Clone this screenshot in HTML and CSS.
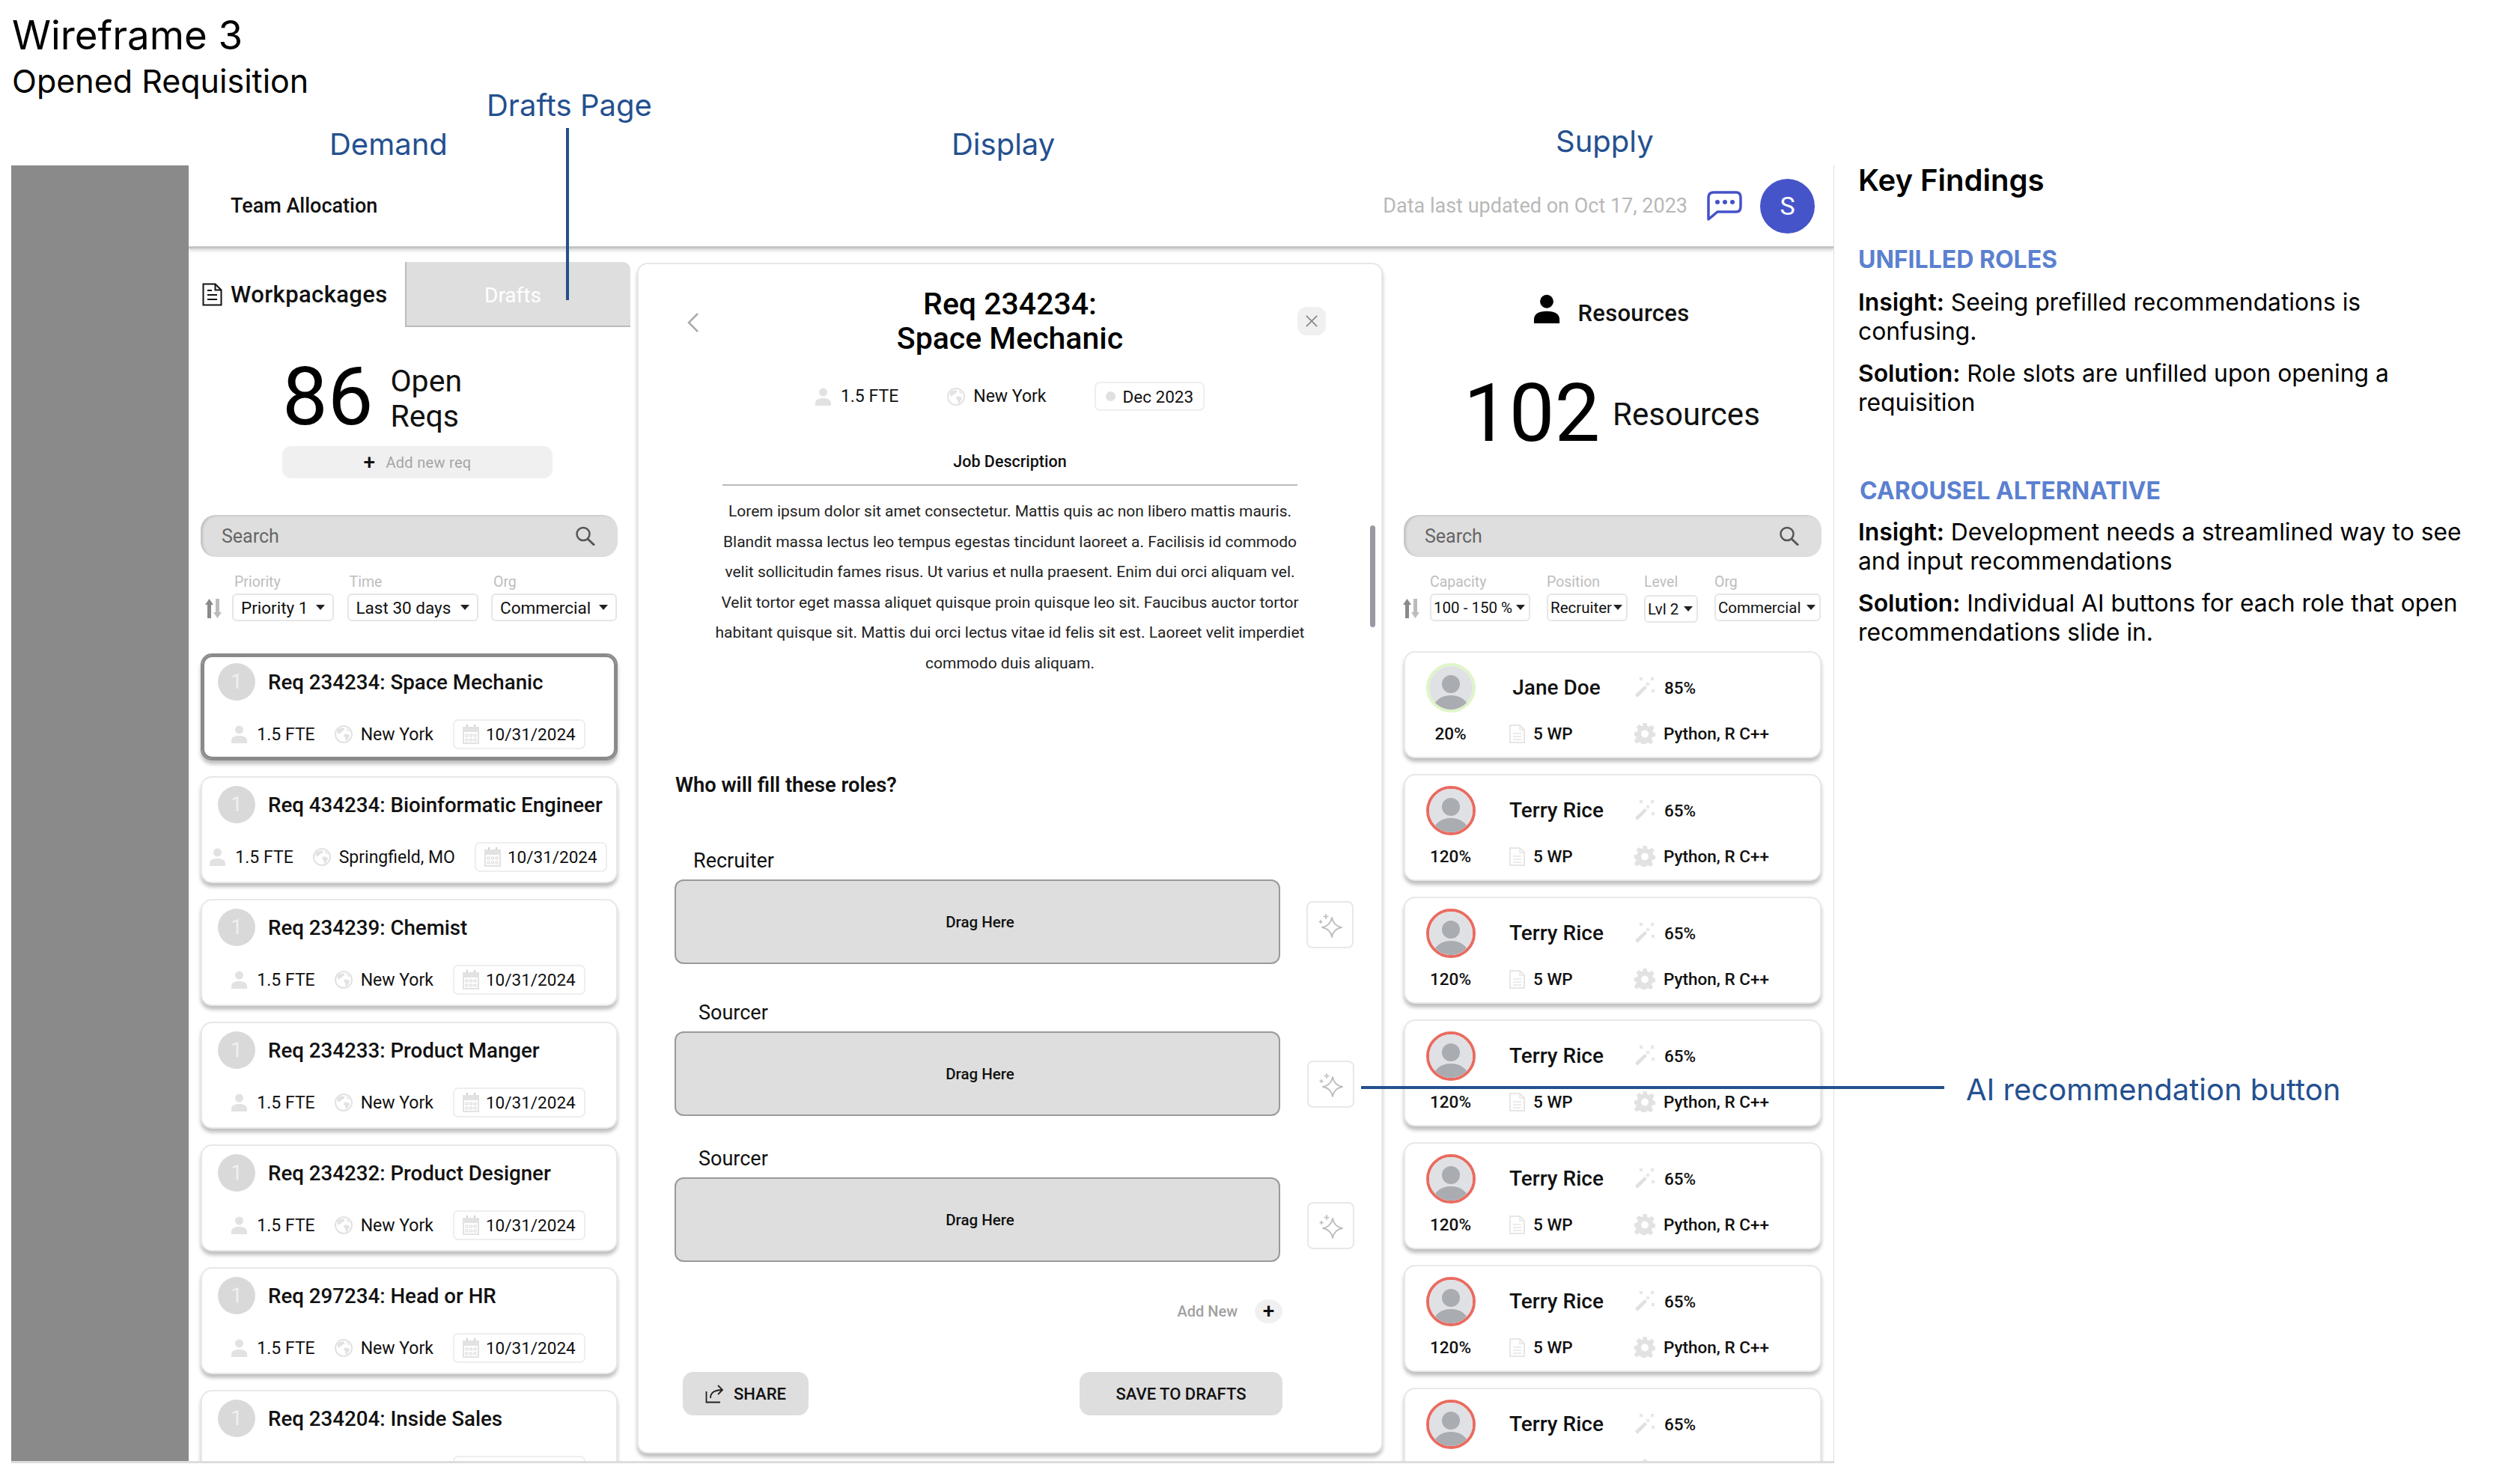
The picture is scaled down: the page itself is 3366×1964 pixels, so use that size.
FILE: index.html
```html
<!DOCTYPE html>
<html>
<head>
    <title>Wireframe 3 - Opened Requisition</title>
    <link rel="stylesheet" href="styles.css">
</head>
<body>
    <!-- shared icons -->
    <svg class="sprites" xmlns="http://www.w3.org/2000/svg">
        <symbol id="i-person" viewBox="0 0 21 24"><circle cx="10.5" cy="6" r="5.5"/><path d="M0 24v-3c0-5 4-7 10.500-7s10.500 2 10.500 7v3z"/></symbol>
        <symbol id="i-globe" viewBox="0 0 24 24"><circle cx="12" cy="12" r="11" fill="none" stroke="#e2e2e2" stroke-width="2"/><path d="M5 5c3-1 6-2 8-1 1 2-1 3-3 4-1 2-4 2-4 4-2-1-3-4-1-7zM13 12c3-1 6 0 7 2-1 3-3 6-5 7-1-2 0-4-1-5-2 0-2-3-1-4zM16 4c2 1 3 2 4 4-2 0-4-1-4-4z" fill="#e2e2e2"/></symbol>
        <symbol id="i-cal" viewBox="0 0 22 26"><path d="M0 4h22v6H0z" fill="#e2e2e2"/><path d="M5 0h2v5H5zM15 0h2v5h-2z" fill="#d0d0d0"/><rect x="1" y="4" width="20" height="21" fill="none" stroke="#e2e2e2" stroke-width="2"/><path d="M4 13h3v3H4zM9.500 13h3v3h-3zM15 13h3v3h-3zM4 19h3v3H4zM9.500 19h3v3h-3zM15 19h3v3h-3z" fill="none" stroke="#d8d8d8"/></symbol>
        <symbol id="i-search" viewBox="0 0 27 26"><circle cx="11" cy="10.500" r="8.500" fill="none" stroke="#555" stroke-width="2.500"/><path d="M17 17l9 8.500" stroke="#555" stroke-width="3"/></symbol>
        <symbol id="i-sort" viewBox="0 0 26 26"><path d="M5 26V8H2L7.500 0 13 8h-3v18z" fill="#8a8a8a"/><path d="M16 0v18h-3l5.500 8L24 18h-3V0z" fill="#bcbcbc"/></symbol>
        <symbol id="i-wand" viewBox="0 0 28 29"><path d="M1 24L14 12l3 3L4 28z" fill="#e0e0e0"/><path d="M15 10l3-3 3 3-3 3z" fill="#e8e8e8"/><path d="M7 1l4 4M11 1L7 5M22 1l4 4M26 1l-4 4M23 17l4 4M27 17l-4 4" stroke="#e0e0e0" stroke-width="1.500"/></symbol>
        <symbol id="i-doc" viewBox="0 0 21 25"><path d="M1 1h13l6 6v17H1z" fill="none" stroke="#e6e6e6" stroke-width="2"/><path d="M14 1v6h6M5 12h11M5 16h11M5 20h11" fill="none" stroke="#e6e6e6" stroke-width="1.500"/></symbol>
        <symbol id="i-gear" viewBox="0 0 28 28"><path d="M11.500 0h5l.8 4 2.600 1.100 3.400-2.300 3.500 3.500-2.300 3.400L25 12.300l3 .7v5l-4 .8-1.100 2.600 2.300 3.400-3.500 3.500-3.400-2.300-2.500 1-.8 3.200h-5l-.8-3.800-2.600-1.100-3.400 2.300-3.500-3.500 2.300-3.400L2.900 18 0 17.300v-5l3.800-.8 1.100-2.600-2.300-3.400 3.500-3.500 3.400 2.300 2-.9z" fill="#e2e2e2"/><circle cx="14" cy="14.500" r="5" fill="#fff"/></symbol>
        <symbol id="i-avatar" viewBox="0 0 66 66"><defs><clipPath id="avatar-clip"><circle cx="33" cy="33" r="29"/></clipPath></defs><circle cx="33" cy="33" r="29" fill="#dfe1e4"/><g clip-path="url(#avatar-clip)" fill="#a9acb1"><circle cx="33" cy="28" r="12"/><ellipse cx="33" cy="60" rx="23" ry="17"/></g></symbol>
        <symbol id="i-spark" viewBox="0 0 59 59"><path d="M32 20Q34 31 45 33 34 35 32 46 30 35 19 33 30 31 32 20z" fill="none" stroke="#bdbdbd" stroke-width="1.800" stroke-linejoin="round"/><path d="M24 15v7M20.500 18.500h7M17 23v5M14.500 25.500h5" stroke="#bdbdbd" stroke-width="1.500"/></symbol>
    </svg>

    <header class="page-title">
        <h1>Wireframe 3</h1>
        <h2>Opened Requisition</h2>
    </header>

    <div class="workspace">
        <div class="app">
            <div class="sidebar"></div>
            <div class="main">
                <div class="topbar">
                    <span class="topbar-title">Team Allocation</span>
                    <span class="updated">Data last updated on Oct 17, 2023</span>
                    <svg class="chat" viewBox="0 0 49 42"><path d="M3 39V10q0-7 7-7h30q6 0 6 7v12q0 7-6 7H15z" fill="none" stroke="#4452c8" stroke-width="3.500" stroke-linejoin="round"/><circle cx="15" cy="16" r="3" fill="#4452c8"/><circle cx="25" cy="16" r="3" fill="#4452c8"/><circle cx="35" cy="16" r="3" fill="#4452c8"/></svg>
                    <span class="user">S</span>
                </div>

                <div class="columns">
                    <!-- demand -->
                    <section class="col col-demand">
                        <div class="tabs">
                            <div class="tab-active">
                                <svg class="tab-icon" viewBox="0 0 27 31"><path d="M1.500 1.500h16l8 8v20h-24z" fill="none" stroke="#111" stroke-width="2"/><path d="M17.500 1.500v8h8M7 10h6M7 16h13M7 22h13" fill="none" stroke="#111" stroke-width="2"/></svg>
                                Workpackages
                            </div>
                            <div class="tab-off">Drafts</div>
                        </div>

                        <div class="stat stat-demand">
                            <span class="stat-num">86</span>
                            <span class="stat-label">Open<br>Reqs</span>
                        </div>
                        <div class="add-req"><span class="plus">+</span>Add new req</div>

                        <div class="search search-demand">
                            <span>Search</span>
                            <svg class="search-icon"><use href="#i-search"/></svg>
                        </div>

                        <div class="filters">
                            <svg class="sort"><use href="#i-sort"/></svg>
                            <div class="filter f-priority"><label>Priority</label><div class="dropdown">Priority 1<i class="caret"></i></div></div>
                            <div class="filter f-time"><label>Time</label><div class="dropdown">Last 30 days<i class="caret"></i></div></div>
                            <div class="filter f-org"><label>Org</label><div class="dropdown">Commercial<i class="caret"></i></div></div>
                        </div>

                        <div class="cards">
                            <div class="card req selected">
                                <div class="req-top"><span class="badge">1</span><span class="req-title">Req 234234: Space Mechanic</span></div>
                                <div class="req-meta">
                                    <span class="meta"><svg class="ico-person"><use href="#i-person"/></svg>1.5 FTE</span>
                                    <span class="meta"><svg class="ico-globe"><use href="#i-globe"/></svg>New York</span>
                                    <span class="date"><svg class="ico-cal"><use href="#i-cal"/></svg>10/31/2024</span>
                                </div>
                            </div>
                            <div class="card req">
                                <div class="req-top"><span class="badge">1</span><span class="req-title">Req 434234: Bioinformatic Engineer</span></div>
                                <div class="req-meta">
                                    <span class="meta"><svg class="ico-person"><use href="#i-person"/></svg>1.5 FTE</span>
                                    <span class="meta"><svg class="ico-globe"><use href="#i-globe"/></svg>Springfield, MO</span>
                                    <span class="date"><svg class="ico-cal"><use href="#i-cal"/></svg>10/31/2024</span>
                                </div>
                            </div>
                            <div class="card req">
                                <div class="req-top"><span class="badge">1</span><span class="req-title">Req 234239: Chemist</span></div>
                                <div class="req-meta">
                                    <span class="meta"><svg class="ico-person"><use href="#i-person"/></svg>1.5 FTE</span>
                                    <span class="meta"><svg class="ico-globe"><use href="#i-globe"/></svg>New York</span>
                                    <span class="date"><svg class="ico-cal"><use href="#i-cal"/></svg>10/31/2024</span>
                                </div>
                            </div>
                            <div class="card req">
                                <div class="req-top"><span class="badge">1</span><span class="req-title">Req 234233: Product Manger</span></div>
                                <div class="req-meta">
                                    <span class="meta"><svg class="ico-person"><use href="#i-person"/></svg>1.5 FTE</span>
                                    <span class="meta"><svg class="ico-globe"><use href="#i-globe"/></svg>New York</span>
                                    <span class="date"><svg class="ico-cal"><use href="#i-cal"/></svg>10/31/2024</span>
                                </div>
                            </div>
                            <div class="card req">
                                <div class="req-top"><span class="badge">1</span><span class="req-title">Req 234232: Product Designer</span></div>
                                <div class="req-meta">
                                    <span class="meta"><svg class="ico-person"><use href="#i-person"/></svg>1.5 FTE</span>
                                    <span class="meta"><svg class="ico-globe"><use href="#i-globe"/></svg>New York</span>
                                    <span class="date"><svg class="ico-cal"><use href="#i-cal"/></svg>10/31/2024</span>
                                </div>
                            </div>
                            <div class="card req">
                                <div class="req-top"><span class="badge">1</span><span class="req-title">Req 297234: Head or HR</span></div>
                                <div class="req-meta">
                                    <span class="meta"><svg class="ico-person"><use href="#i-person"/></svg>1.5 FTE</span>
                                    <span class="meta"><svg class="ico-globe"><use href="#i-globe"/></svg>New York</span>
                                    <span class="date"><svg class="ico-cal"><use href="#i-cal"/></svg>10/31/2024</span>
                                </div>
                            </div>
                            <div class="card req">
                                <div class="req-top"><span class="badge">1</span><span class="req-title">Req 234204: Inside Sales</span></div>
                                <div class="req-meta">
                                    <span class="meta"><svg class="ico-person"><use href="#i-person"/></svg>1.5 FTE</span>
                                    <span class="meta"><svg class="ico-globe"><use href="#i-globe"/></svg>New York</span>
                                    <span class="date"><svg class="ico-cal"><use href="#i-cal"/></svg>10/31/2024</span>
                                </div>
                            </div>
                        </div>
                    </section>

                    <!-- display -->
                    <section class="detail">
                        <div class="detail-head">
                            <svg class="back" viewBox="0 0 17 28"><path d="M15 2L3 14l12 12" fill="none" stroke="#aaa" stroke-width="2.500"/></svg>
                            <h3 class="detail-title">Req 234234:<br>Space Mechanic</h3>
                            <span class="close"><svg viewBox="0 0 20 20"><path d="M2 2l16 16M18 2L2 18" stroke="#8a8a8a" stroke-width="2"/></svg></span>
                        </div>
                        <div class="detail-meta">
                            <span class="meta"><svg class="ico-person"><use href="#i-person"/></svg>1.5 FTE</span>
                            <span class="meta"><svg class="ico-globe"><use href="#i-globe"/></svg>New York</span>
                            <span class="date date-detail"><i class="dot"></i>Dec 2023</span>
                        </div>
                        <h4 class="job-heading">Job Description</h4>
                        <p class="job-text">Lorem ipsum dolor sit amet consectetur. Mattis quis ac non libero mattis mauris.<br>Blandit massa lectus leo tempus egestas tincidunt laoreet a. Facilisis id commodo<br>velit sollicitudin fames risus. Ut varius et nulla praesent. Enim dui orci aliquam vel.<br>Velit tortor eget massa aliquet quisque proin quisque leo sit. Faucibus auctor tortor<br>habitant quisque sit. Mattis dui orci lectus vitae id felis sit est. Laoreet velit imperdiet<br>commodo duis aliquam.</p>
                        <div class="scrollbar"></div>

                        <h4 class="roles-heading">Who will fill these roles?</h4>
                        <div class="role role-1">
                            <div class="role-name">Recruiter</div>
                            <div class="role-row">
                                <div class="slot">Drag Here</div>
                                <span class="ai-btn"><svg><use href="#i-spark"/></svg></span>
                            </div>
                        </div>
                        <div class="role role-2">
                            <div class="role-name">Sourcer</div>
                            <div class="role-row">
                                <div class="slot">Drag Here</div>
                                <span class="ai-btn"><svg><use href="#i-spark"/></svg></span>
                            </div>
                        </div>
                        <div class="role role-3">
                            <div class="role-name">Sourcer</div>
                            <div class="role-row">
                                <div class="slot">Drag Here</div>
                                <span class="ai-btn"><svg><use href="#i-spark"/></svg></span>
                            </div>
                        </div>
                        <div class="add-role">Add New<span class="add-circle">+</span></div>
                        <div class="detail-actions">
                            <span class="btn btn-share">
                                <svg viewBox="0 0 25 25"><path d="M1.500 9v14.500H20" fill="none" stroke="#222" stroke-width="1.800"/><path d="M7 18c0-7 5-11 16-11M17 1l6 6-6 6" fill="none" stroke="#222" stroke-width="1.800"/></svg>
                                SHARE
                            </span>
                            <span class="btn btn-save">SAVE TO DRAFTS</span>
                        </div>
                    </section>

                    <!-- supply -->
                    <section class="col col-supply">
                        <div class="res-heading">
                            <svg class="res-icon"><use href="#i-person"/></svg>
                            Resources
                        </div>
                        <div class="stat stat-supply">
                            <span class="stat-num">102</span>
                            <span class="stat-label">Resources</span>
                        </div>
                        <div class="search search-supply">
                            <span>Search</span>
                            <svg class="search-icon"><use href="#i-search"/></svg>
                        </div>
                        <div class="filters filters-supply">
                            <svg class="sort"><use href="#i-sort"/></svg>
                            <div class="filter f-capacity"><label>Capacity</label><div class="dropdown">100 - 150 %<i class="caret"></i></div></div>
                            <div class="filter f-position"><label>Position</label><div class="dropdown">Recruiter<i class="caret"></i></div></div>
                            <div class="filter f-level"><label>Level</label><div class="dropdown">Lvl 2<i class="caret"></i></div></div>
                            <div class="filter f-org2"><label>Org</label><div class="dropdown">Commercial<i class="caret"></i></div></div>
                        </div>

                        <div class="cards cards-supply">
                            <div class="card res">
                                <span class="avatar ok"><svg><use href="#i-avatar"/></svg></span>
                                <span class="res-name">Jane Doe</span>
                                <span class="meta res-stat"><svg class="ico-wand"><use href="#i-wand"/></svg>85%</span>
                                <span class="res-cap">20%</span>
                                <span class="meta res-wp"><svg class="ico-doc"><use href="#i-doc"/></svg>5 WP</span>
                                <span class="meta res-stat"><svg class="ico-gear"><use href="#i-gear"/></svg>Python, R C++</span>
                            </div>
                            <div class="card res">
                                <span class="avatar over"><svg><use href="#i-avatar"/></svg></span>
                                <span class="res-name">Terry Rice</span>
                                <span class="meta res-stat"><svg class="ico-wand"><use href="#i-wand"/></svg>65%</span>
                                <span class="res-cap">120%</span>
                                <span class="meta res-wp"><svg class="ico-doc"><use href="#i-doc"/></svg>5 WP</span>
                                <span class="meta res-stat"><svg class="ico-gear"><use href="#i-gear"/></svg>Python, R C++</span>
                            </div>
                            <div class="card res">
                                <span class="avatar over"><svg><use href="#i-avatar"/></svg></span>
                                <span class="res-name">Terry Rice</span>
                                <span class="meta res-stat"><svg class="ico-wand"><use href="#i-wand"/></svg>65%</span>
                                <span class="res-cap">120%</span>
                                <span class="meta res-wp"><svg class="ico-doc"><use href="#i-doc"/></svg>5 WP</span>
                                <span class="meta res-stat"><svg class="ico-gear"><use href="#i-gear"/></svg>Python, R C++</span>
                            </div>
                            <div class="card res">
                                <span class="avatar over"><svg><use href="#i-avatar"/></svg></span>
                                <span class="res-name">Terry Rice</span>
                                <span class="meta res-stat"><svg class="ico-wand"><use href="#i-wand"/></svg>65%</span>
                                <span class="res-cap">120%</span>
                                <span class="meta res-wp"><svg class="ico-doc"><use href="#i-doc"/></svg>5 WP</span>
                                <span class="meta res-stat"><svg class="ico-gear"><use href="#i-gear"/></svg>Python, R C++</span>
                            </div>
                            <div class="card res">
                                <span class="avatar over"><svg><use href="#i-avatar"/></svg></span>
                                <span class="res-name">Terry Rice</span>
                                <span class="meta res-stat"><svg class="ico-wand"><use href="#i-wand"/></svg>65%</span>
                                <span class="res-cap">120%</span>
                                <span class="meta res-wp"><svg class="ico-doc"><use href="#i-doc"/></svg>5 WP</span>
                                <span class="meta res-stat"><svg class="ico-gear"><use href="#i-gear"/></svg>Python, R C++</span>
                            </div>
                            <div class="card res">
                                <span class="avatar over"><svg><use href="#i-avatar"/></svg></span>
                                <span class="res-name">Terry Rice</span>
                                <span class="meta res-stat"><svg class="ico-wand"><use href="#i-wand"/></svg>65%</span>
                                <span class="res-cap">120%</span>
                                <span class="meta res-wp"><svg class="ico-doc"><use href="#i-doc"/></svg>5 WP</span>
                                <span class="meta res-stat"><svg class="ico-gear"><use href="#i-gear"/></svg>Python, R C++</span>
                            </div>
                            <div class="card res">
                                <span class="avatar over"><svg><use href="#i-avatar"/></svg></span>
                                <span class="res-name">Terry Rice</span>
                                <span class="meta res-stat"><svg class="ico-wand"><use href="#i-wand"/></svg>65%</span>
                                <span class="res-cap">120%</span>
                                <span class="meta res-wp"><svg class="ico-doc"><use href="#i-doc"/></svg>5 WP</span>
                                <span class="meta res-stat"><svg class="ico-gear"><use href="#i-gear"/></svg>Python, R C++</span>
                            </div>
                        </div>
                    </section>
                </div>
            </div>
        </div>

        <aside class="findings">
            <h2>Key Findings</h2>
            <h3>UNFILLED ROLES</h3>
            <p class="insight"><b>Insight:</b> Seeing prefilled recommendations is confusing.</p>
            <p class="solution"><b>Solution:</b> Role slots are unfilled upon opening a requisition</p>
            <h3 class="second">CAROUSEL ALTERNATIVE</h3>
            <p class="insight"><b>Insight:</b> Development needs a streamlined way to see and input recommendations</p>
            <p class="solution"><b>Solution:</b> Individual AI buttons for each role that open recommendations slide in.</p>
        </aside>
    </div>

    <!-- annotations drawn over the wireframe -->
    <span class="note note-demand">Demand</span>
    <span class="note note-drafts">Drafts Page</span>
    <span class="note note-display">Display</span>
    <span class="note note-supply">Supply</span>
    <span class="note note-ai">AI recommendation button</span>
    <i class="note-line line-drafts"></i>
    <i class="note-line line-ai"></i>
</body>
</html>
```

FILE: styles.css
```css
* {
    box-sizing: border-box;
}

html, body {
    margin: 0;
    padding: 0;
}

body {
    position: relative;
    width: 3366px;
    height: 1964px;
    overflow: hidden;
    background-color: #fff;
    color: #111;
    font-family: Roboto, "Liberation Sans", sans-serif;
}

h1, h2, h3, h4, p {
    margin: 0;
    font-weight: normal;
}

.sprites {
    position: absolute;
    width: 0;
    height: 0;
}

/* page title */
.page-title {
    height: 221px;
    padding: 17px 0 0 16px;
    font-family: Inter, sans-serif;
    color: #000;
}

.page-title h1 {
    font-size: 52.800px;
    line-height: 60px;
}

.page-title h2 {
    margin-top: 6px;
    font-size: 43px;
    line-height: 50px;
}

.workspace {
    display: flex;
    align-items: flex-start;
}

/* app frame */
.app {
    display: flex;
    width: 2435px;
    height: 1734px;
    margin-left: 15px;
    border-right: 1px solid #ddd;
    border-bottom: 3px solid #ddd;
}

.sidebar {
    flex: none;
    width: 237px;
    background-color: #8a8a8a;
}

.main {
    flex: 1;
    min-width: 0;
    display: flex;
    flex-direction: column;
    overflow: hidden;
}

.topbar {
    flex: none;
    position: relative;
    z-index: 1;
    display: flex;
    align-items: center;
    height: 111px;
    padding: 0 25px 0 56px;
    background-color: #fff;
    border-bottom: 3px solid #c4c4c4;
    box-shadow: 0 3px 4px rgba(0, 0, 0, 0.15);
}

.topbar-title {
    font-size: 27px;
    font-weight: 500;
}

.updated {
    margin-left: auto;
    font-size: 27px;
    color: #b8b8b8;
}

.chat {
    width: 49px;
    height: 42px;
    margin: 0 23px 0 25px;
}

.user {
    width: 73px;
    height: 73px;
    border-radius: 50%;
    background-color: #4654c9;
    color: #fff;
    font-size: 34px;
    line-height: 73px;
    text-align: center;
}

.columns {
    flex: 1;
    display: flex;
    min-height: 0;
}

.col {
    flex: none;
    overflow: hidden;
}

.col-demand {
    width: 599px;
    padding: 18px 26px 0 16px;
}

.col-supply {
    width: 603px;
    padding: 66px 17px 0 28px;
}

/* tabs */
.tabs {
    display: flex;
    width: 590px;
    margin-left: -16px;
    height: 87px;
}

.tab-active {
    flex: none;
    display: flex;
    align-items: center;
    width: 289px;
    padding: 0 0 0 18px;
    font-size: 31px;
    font-weight: 500;
    letter-spacing: 0.4px;
    white-space: nowrap;
}

.tab-icon {
    width: 27px;
    height: 31px;
    margin: 0 11px 0 0;
}

.tab-off {
    flex: 1;
    padding: 28px 0 0 104px;
    font-size: 28px;
    color: #fff;
    background-color: #dedede;
    border-left: 2px solid #bbb;
    border-bottom: 2px solid #bbb;
    border-top-right-radius: 10px;
}

/* big numbers */
.stat {
    display: flex;
    align-items: center;
    height: 100px;
}

.stat-num {
    font-size: 108px;
    line-height: 100px;
    color: #000;
}

.stat-label {
    font-size: 41px;
    line-height: 47px;
}

.stat-demand {
    margin: 43px 0 0 109px;
}

.stat-demand .stat-label {
    margin: 5px 0 0 23px;
}

.stat-supply {
    margin: 64px 0 0 80px;
}

.stat-supply .stat-label {
    margin: 2px 0 0 17px;
    font-size: 42px;
}

.add-req {
    display: flex;
    align-items: center;
    justify-content: center;
    height: 43px;
    width: 361px;
    margin: 16px 0 0 109px;
    background-color: #f0f0f0;
    border-radius: 12px;
    font-size: 20px;
    color: #a5a5a5;
    letter-spacing: 0.3px;
}

.plus {
    margin-right: 14px;
    font-size: 28px;
    font-weight: 500;
    line-height: 28px;
    color: #111;
}

/* search */
.search {
    display: flex;
    align-items: center;
    justify-content: space-between;
    height: 56px;
    padding: 0 30px 0 28px;
    background-color: #dedede;
    border-radius: 20px;
    box-shadow: inset 3px 1px 3px rgba(0, 0, 0, 0.12);
    font-size: 25px;
    color: #666;
}

.search-demand {
    margin-top: 49px;
}

.search-supply {
    margin-top: 86px;
}

.search-icon {
    width: 27px;
    height: 26px;
}

/* filters */
.filters {
    display: flex;
    align-items: flex-end;
    margin-top: 24px;
    height: 62px;
    gap: 17.500px;
}

.sort {
    flex: none;
    width: 26px;
    height: 26px;
    margin: 0 -5.500px 4px 4px;
}

.filters-supply {
    gap: 22px;
}

.filters-supply .sort {
    margin: 0 -10px 4px -3px;
}

.filter label {
    display: block;
    padding: 1px 0 0 3px;
    height: 25px;
    font-size: 19.500px;
    line-height: 18px;
    color: #bdbdbd;
}

.filters-supply .filter label {
    padding-left: 0;
}

.dropdown {
    display: flex;
    align-items: center;
    justify-content: space-between;
    height: 37px;
    padding: 0 10px;
    border: 2px solid #e6e6e6;
    border-radius: 6px;
    font-size: 22.500px;
    white-space: nowrap;
}

.filters-supply .dropdown {
    padding: 0 5px 0 3px;
    font-size: 20.500px;
}

.caret {
    flex: none;
    width: 0;
    height: 0;
    border: 6px solid transparent;
    border-top: 7px solid #222;
    border-bottom: 0;
}

.f-priority { width: 136px; }
.f-time { width: 175px; }
.f-org { width: 168px; }
.f-capacity { width: 134px; }
.f-position { width: 108px; }
.f-level { width: 72px; }
.f-org2 { width: 142px; }

.f-level .dropdown {
    margin: 2px 0 -2px;
}

/* cards */
.cards {
    display: flex;
    flex-direction: column;
    gap: 21px;
    margin-top: 43px;
}

.cards-supply {
    margin-top: 40px;
}

.card {
    flex: none;
    height: 143px;
    background-color: #fff;
    border: 2px solid #e8e8e8;
    border-radius: 15px;
    box-shadow: 0 5px 5px rgba(0, 0, 0, 0.25);
}

.req {
    padding: 11px 0 0 21px;
}

.req.selected {
    border-color: #8a8a8a;
    box-shadow: inset 0 0 0 3px #8a8a8a, 0 5px 5px rgba(0, 0, 0, 0.25);
}

.req-top {
    display: flex;
    align-items: center;
    gap: 17px;
}

.badge {
    width: 50px;
    height: 50px;
    border-radius: 50%;
    background-color: #d9d9d9;
    color: #f0f0f0;
    font-size: 28px;
    line-height: 50px;
    text-align: center;
}

.req-title {
    font-size: 27.700px;
    font-weight: 500;
    white-space: nowrap;
}

.req-meta {
    display: flex;
    align-items: center;
    justify-content: center;
    gap: 26px;
    margin: 25px 0 0 -21px;
    padding-right: 2px;
    height: 40px;
}

.meta {
    display: inline-flex;
    align-items: center;
    font-size: 23px;
    white-space: nowrap;
}

.ico-person {
    width: 21px;
    height: 24px;
    margin-right: 13px;
    fill: #e2e2e2;
}

.ico-globe {
    width: 24px;
    height: 24px;
    margin-right: 11px;
}

.date {
    display: inline-flex;
    align-items: center;
    height: 40px;
    padding: 0 11px;
    border: 2px solid #eee;
    border-radius: 7px;
    font-size: 22.500px;
}

.ico-cal {
    width: 22px;
    height: 26px;
    margin-right: 9px;
}

/* detail panel */
.detail {
    flex: none;
    position: relative;
    width: 996px;
    height: 1591px;
    margin-top: 19px;
    padding-top: 30px;
    background-color: #fff;
    border: 2px solid #e8e8e8;
    border-radius: 14px;
    box-shadow: 0 5px 5px rgba(0, 0, 0, 0.25);
}

.detail-head {
    display: grid;
    grid-template-columns: 1fr auto 1fr;
    align-items: center;
}

.back {
    width: 17px;
    height: 28px;
    margin: 4px 0 0 64px;
}

.detail-title {
    font-size: 41px;
    font-weight: 500;
    line-height: 46px;
    text-align: center;
    color: #000;
}

.close {
    justify-self: end;
    display: flex;
    align-items: center;
    justify-content: center;
    width: 38px;
    height: 38px;
    margin-right: 74px;
    background-color: #f0f0f0;
    border-radius: 12px;
}

.close svg {
    width: 18px;
    height: 18px;
}

.detail-meta {
    display: flex;
    align-items: center;
    justify-content: center;
    gap: 65px;
    height: 39px;
    margin-top: 35px;
}

.date-detail {
    height: 39px;
    padding: 0 13px;
}

.dot {
    width: 13px;
    height: 13px;
    margin-right: 9px;
    border-radius: 50%;
    background-color: #e0e0e0;
}

.job-heading {
    width: 768px;
    margin: 53px auto 0;
    padding-bottom: 15px;
    border-bottom: 2px solid #bbb;
    font-size: 21.500px;
    font-weight: 500;
    line-height: 30px;
    text-align: center;
}

.job-text {
    margin-top: 14px;
    font-size: 21px;
    line-height: 40.500px;
    text-align: center;
    color: #222;
}

/* sits on the panel's edge, not part of the flow */
.scrollbar {
    position: absolute;
    left: 977px;
    top: 349px;
    width: 7px;
    height: 136px;
    border-radius: 4px;
    background-color: #9a98a2;
}

.roles-heading {
    margin: 127px 0 0 49px;
    font-size: 27.300px;
    font-weight: 600;
    line-height: 32px;
}

.role {
    padding-left: 48px;
}

.role-name {
    font-size: 27px;
    line-height: 30px;
    margin-bottom: 10px;
}

.role-row {
    display: flex;
    align-items: flex-start;
}

.slot {
    flex: none;
    display: flex;
    align-items: center;
    justify-content: center;
    width: 809px;
    height: 113px;
    padding-left: 7px;
    background-color: #dedede;
    border: 2px solid #9a9a9a;
    border-radius: 12px;
    font-size: 20.500px;
    font-weight: 500;
}

.ai-btn {
    flex: none;
    display: flex;
    width: 63px;
    height: 63px;
    margin-left: 35px;
    border: 2px solid #e8e8e8;
    border-radius: 8px;
}

.ai-btn svg {
    width: 59px;
    height: 59px;
}

.role-1 {
    margin-top: 70px;
}

.role-1 .role-name {
    padding-left: 25px;
}

.role-1 .ai-btn {
    margin-top: 29px;
}

.role-2 {
    margin-top: 50px;
}

.role-2 .role-name,
.role-3 .role-name {
    padding-left: 32px;
}

.role-2 .ai-btn {
    margin-top: 39px;
    margin-left: 36px;
}

.role-3 {
    margin-top: 42px;
}

.role-3 .ai-btn {
    margin-top: 33px;
    margin-left: 36px;
}

.add-role {
    display: flex;
    align-items: center;
    justify-content: flex-end;
    gap: 23px;
    width: 860px;
    margin-top: 50px;
    height: 32px;
    font-size: 20px;
    font-weight: 500;
    color: #a0a0a0;
}

.add-circle {
    width: 37px;
    height: 32px;
    border-radius: 50%;
    background-color: #f0f0f0;
    color: #111;
    font-size: 28px;
    line-height: 32px;
    text-align: center;
}

.detail-actions {
    display: flex;
    justify-content: space-between;
    margin: 65px 132px 0 59px;
}

.btn {
    display: flex;
    align-items: center;
    justify-content: center;
    height: 58px;
    background-color: #dedede;
    border-radius: 14px;
    font-size: 22px;
    font-weight: 500;
}

.btn-share {
    width: 168px;
    gap: 13px;
}

.btn-share svg {
    width: 25px;
    height: 25px;
}

.btn-save {
    width: 271px;
}

/* supply column */
.res-heading {
    display: flex;
    align-items: center;
    justify-content: center;
    gap: 22px;
    height: 40px;
    margin-left: -4px;
    font-size: 31px;
    font-weight: 500;
    letter-spacing: 0.3px;
}

.res-icon {
    width: 38px;
    height: 39px;
    margin-top: -12px;
    fill: #000;
}

.res {
    display: grid;
    grid-template-columns: 75px 208px auto;
    grid-template-rows: 67px 40px;
    row-gap: 8px;
    align-items: center;
    padding: 13px 0 0 23px;
}

.avatar {
    justify-self: center;
    width: 66px;
    height: 66px;
    border-radius: 50%;
    border: 4px solid #dff5c8;
}

.avatar svg {
    display: block;
    width: 66px;
    height: 66px;
    margin: -4px;
}

.avatar.over {
    border-color: #ea6b60;
}

.res-name {
    justify-self: center;
    font-size: 28px;
    font-weight: 500;
}

.res-stat {
    font-size: 22.500px;
    font-weight: 500;
}

.res-cap {
    justify-self: center;
    font-size: 22.500px;
    font-weight: 500;
}

.res-wp {
    padding-left: 41px;
    font-size: 22.500px;
    font-weight: 500;
}

.ico-wand {
    width: 28px;
    height: 29px;
    margin-right: 12px;
}

.ico-doc {
    width: 21px;
    height: 25px;
    margin-right: 11px;
}

.ico-gear {
    width: 28px;
    height: 28px;
    margin-right: 11px;
}

/* findings */
.findings {
    width: 826px;
    margin: -4px 0 0 32px;
    font-family: Inter, sans-serif;
    color: #000;
}

.findings h2 {
    font-size: 40px;
    font-weight: 600;
    line-height: 48px;
}

.findings h3 {
    margin-top: 62px;
    font-size: 32px;
    font-weight: 700;
    line-height: 40px;
    color: #5b80d0;
}

.findings h3.second {
    margin: 79px 0 0 2px;
}

.findings p {
    font-size: 31.800px;
    line-height: 38.500px;
}

.findings b {
    font-weight: 600;
}

.findings .insight {
    margin-top: 18px;
}

.findings .second + .insight {
    margin-top: 16px;
}

.findings .solution {
    margin-top: 18px;
}

/* annotations */
.note {
    position: absolute;
    font-family: Inter, sans-serif;
    font-size: 40px;
    line-height: 50px;
    color: #24508f;
    white-space: nowrap;
}

.note-demand { left: 440px; top: 168px; }
.note-drafts { left: 650px; top: 116px; }
.note-display { left: 1271px; top: 168px; }
.note-supply { left: 2078px; top: 164px; }
.note-ai { left: 2626px; top: 1431px; }

.note-line {
    position: absolute;
    z-index: 2;
    background-color: #24508f;
}

.line-drafts {
    left: 756px;
    top: 171px;
    width: 4px;
    height: 230px;
}

.line-ai {
    left: 1818px;
    top: 1451px;
    width: 779px;
    height: 4px;
}
```
